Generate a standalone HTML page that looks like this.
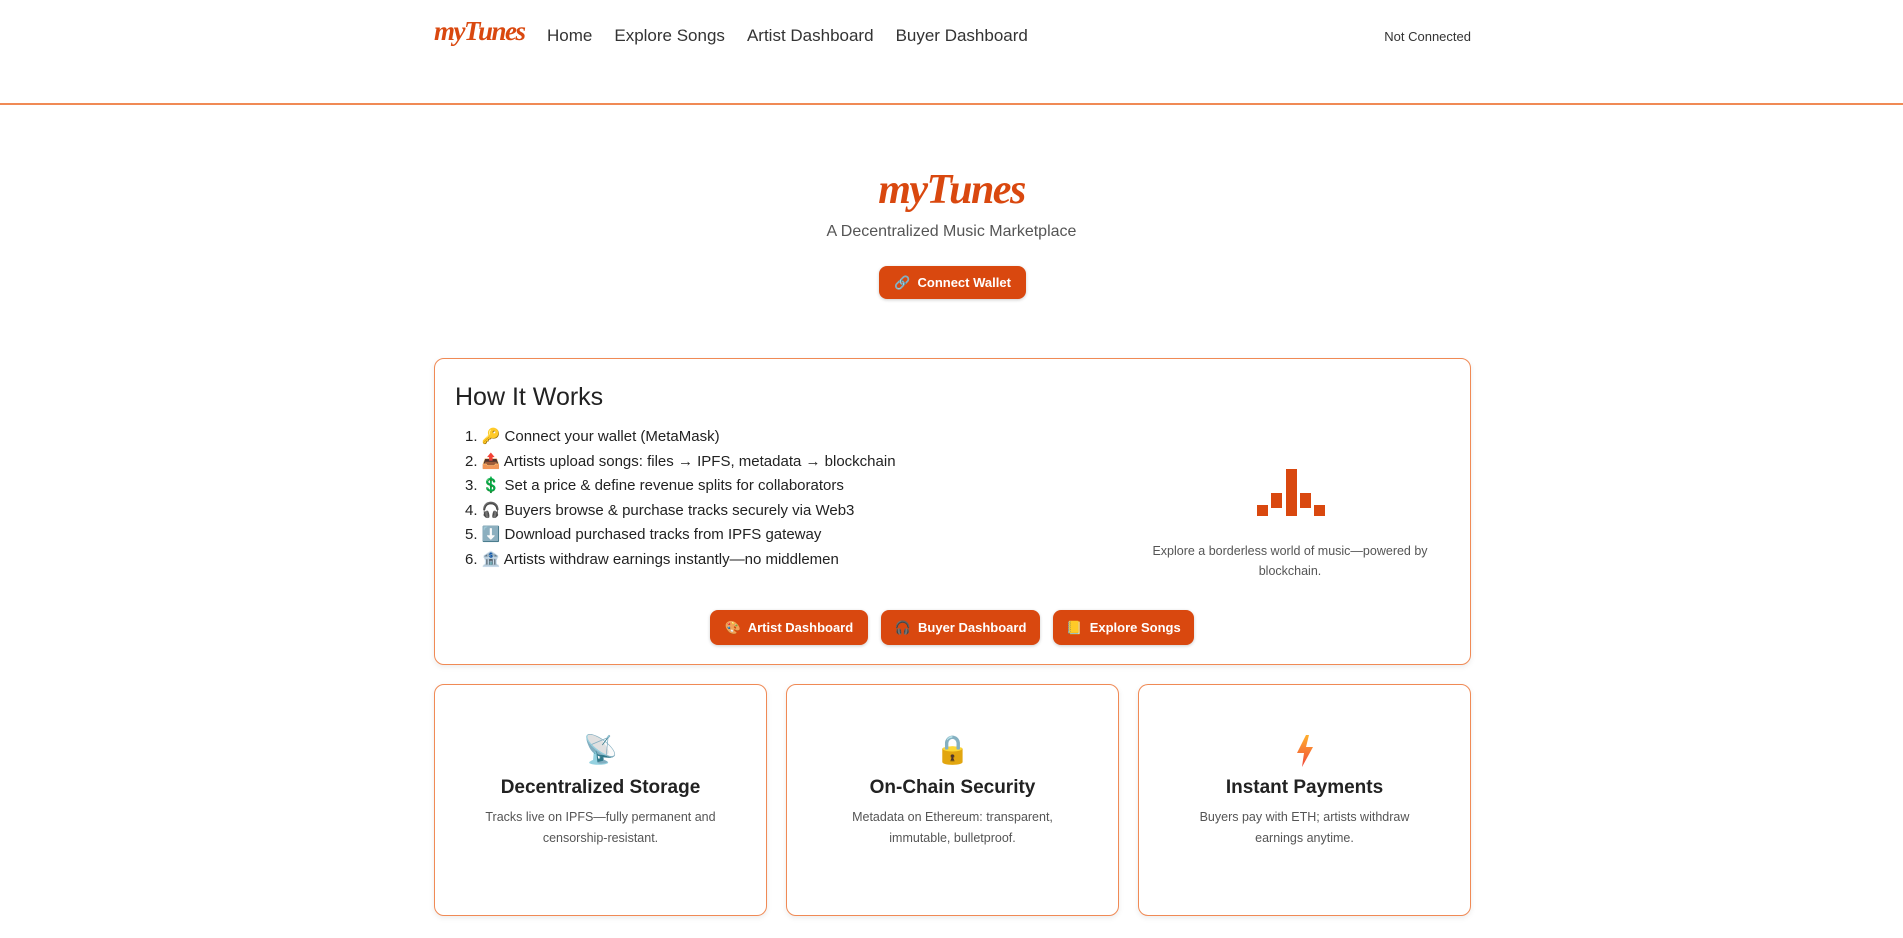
<!DOCTYPE html>
<html><head><meta charset="utf-8"><style>
*{box-sizing:border-box;margin:0;padding:0}
body{width:1903px;height:938px;overflow:hidden;background:#fff;font-family:"Liberation Sans","DejaVu Sans",sans-serif;color:#222}
.nav{height:105px;border-bottom:2px solid #f08a55;position:relative}
.logo{position:absolute;left:434px;top:16px;font-family:"Liberation Serif",serif;font-style:italic;font-weight:bold;color:#d9480f;font-size:27px;letter-spacing:-1.5px}
.links{position:absolute;left:547px;top:26px;font-size:17px;color:#333}
.links span{margin-right:22px}
.nc{position:absolute;right:432px;top:29px;font-size:13px;color:#333}
.ht{position:absolute;left:0;width:1903px;top:166px;font-family:"Liberation Serif",serif;font-style:italic;font-weight:bold;color:#d9480f;font-size:42px;text-align:center;letter-spacing:-1.5px}
.sub{position:absolute;left:0;width:1903px;top:223px;font-size:16px;color:#555;text-align:center}
.btn{position:absolute;background:#d9480f;color:#fff;font-weight:bold;font-size:13px;border-radius:8px;display:flex;align-items:center;justify-content:center;box-shadow:0 1px 3px rgba(0,0,0,.2)}
.card{position:absolute;border:1px solid #f08a55;border-radius:10px;background:#fff;box-shadow:0 2px 6px rgba(0,0,0,.08)}
h2{position:absolute;left:20px;top:24px;font-size:25px;font-weight:normal;color:#222}
ol{position:absolute;left:30px;top:68px;font-size:15px;color:#222;list-style:none}
ol li{height:24.6px}
.fc{text-align:center}
.fc .ic{margin-top:48px;font-size:28px;height:40px}
.fc h3{font-size:19px;font-weight:bold;color:#222;margin-top:4px}
.fc p{font-size:12.5px;color:#555;line-height:21px;width:240px;margin:8px auto 0}
</style></head><body>
<div class="nav">
<div class="logo">myTunes</div>
<div class="links"><span>Home</span><span>Explore Songs</span><span>Artist Dashboard</span><span>Buyer Dashboard</span></div>
<div class="nc">Not Connected</div>
</div>
<div class="ht">myTunes</div>
<div class="sub">A Decentralized Music Marketplace</div>
<div class="btn" style="left:879px;top:266px;width:147px;height:33px">🔗&nbsp; Connect Wallet</div>
<div class="card" style="left:434px;top:358px;width:1037px;height:307px">
<h2>How It Works</h2>
<ol>
<li>1. 🔑 Connect your wallet (MetaMask)</li>
<li>2. 📤 Artists upload songs: files → IPFS, metadata → blockchain</li>
<li>3. 💲 Set a price &amp; define revenue splits for collaborators</li>
<li>4. 🎧 Buyers browse &amp; purchase tracks securely via Web3</li>
<li>5. ⬇️ Download purchased tracks from IPFS gateway</li>
<li>6. 🏦 Artists withdraw earnings instantly—no middlemen</li>
</ol>
<svg style="position:absolute;left:822px;top:110px" width="70" height="48"><g fill="#d9480f"><rect x="0" y="36" width="11" height="11"/><rect x="14" y="24" width="11" height="15"/><rect x="29" y="0" width="11" height="47"/><rect x="43" y="24" width="11" height="15"/><rect x="57" y="36" width="11" height="11"/></g></svg>
<div style="position:absolute;left:700px;width:310px;top:182px;text-align:center;font-size:12.5px;color:#555;line-height:20px">Explore a borderless world of music—powered by blockchain.</div>
</div>
<div class="btn" style="left:710px;top:610px;width:158px;height:35px">🎨&nbsp; Artist Dashboard</div>
<div class="btn" style="left:881px;top:610px;width:159px;height:35px">🎧&nbsp; Buyer Dashboard</div>
<div class="btn" style="left:1053px;top:610px;width:141px;height:35px">📒&nbsp; Explore Songs</div>
<div class="card fc" style="left:434px;top:684px;width:333px;height:232px"><div class="ic">📡</div><h3>Decentralized Storage</h3><p>Tracks live on IPFS—fully permanent and censorship-resistant.</p></div>
<div class="card fc" style="left:786px;top:684px;width:333px;height:232px"><div class="ic">🔒</div><h3>On-Chain Security</h3><p>Metadata on Ethereum: transparent, immutable, bulletproof.</p></div>
<div class="card fc" style="left:1138px;top:684px;width:333px;height:232px"><div class="ic"><svg width="20" height="32" viewBox="0 0 20 32" style="margin-top:2px"><defs><linearGradient id="g" x1="0" y1="0" x2="0" y2="1"><stop offset="0" stop-color="#ffb02e"/><stop offset="1" stop-color="#f0473a"/></linearGradient></defs><path d="M11 0 L2 18 L9 18 L7 32 L18 12 L11 12 L14 0 Z" fill="url(#g)"/></svg></div><h3>Instant Payments</h3><p>Buyers pay with ETH; artists withdraw earnings anytime.</p></div>
</body></html>
